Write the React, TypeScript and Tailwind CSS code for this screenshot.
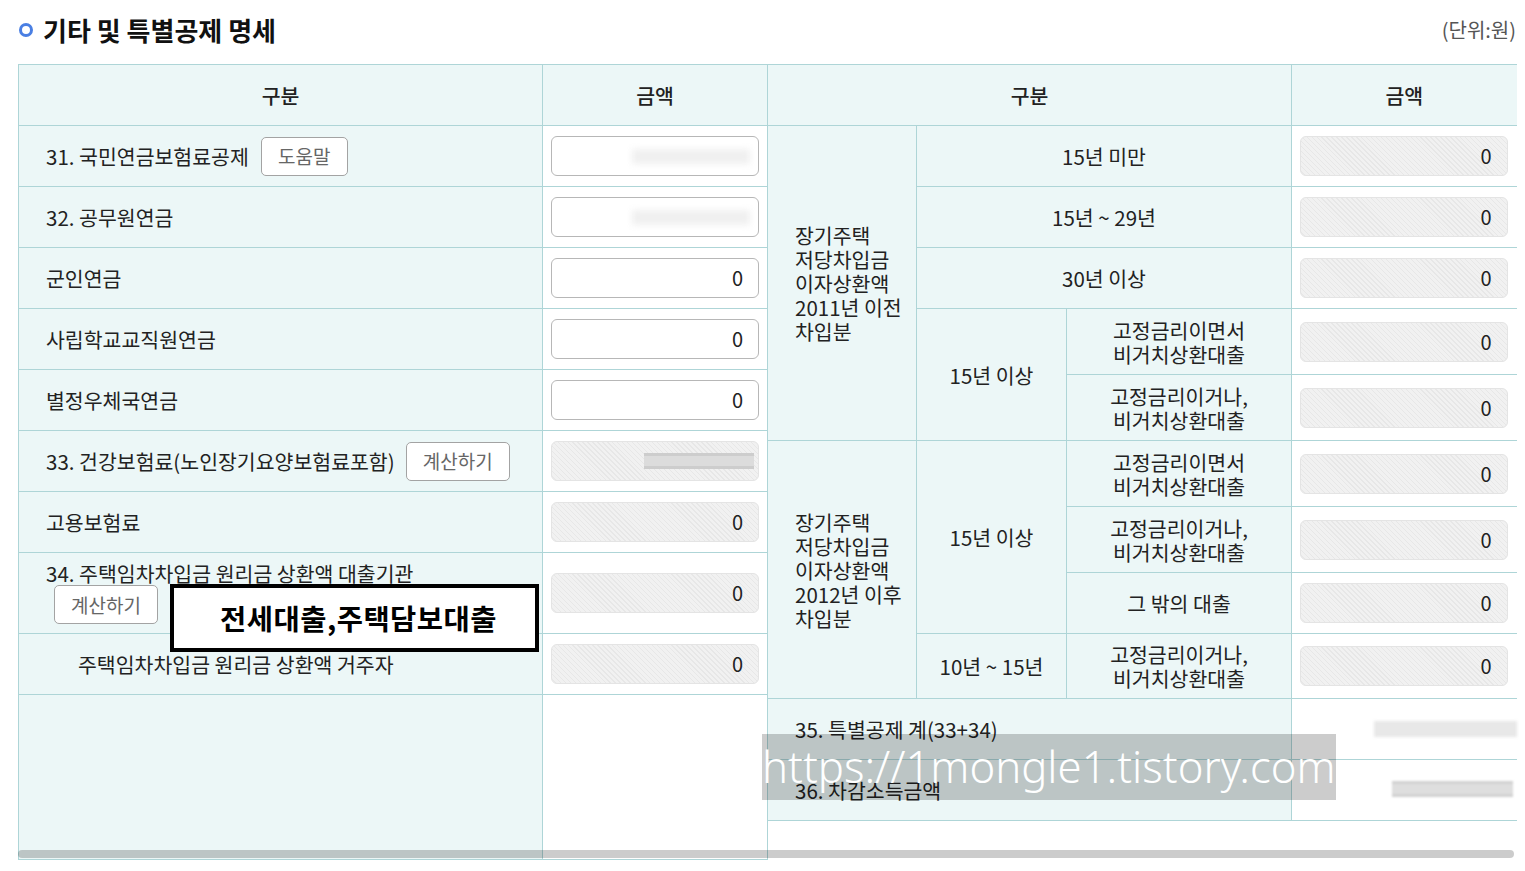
import React from "react";

const FONT = "font-['Noto_Sans_CJK_KR','Noto_Sans',sans-serif]";
const BD = "border border-[#aed5d7]";
const TEAL = "bg-[#ecf7f7]";
const HATCH =
  "bg-[#efefef] bg-[image:repeating-linear-gradient(45deg,#f1f1f1_0px,#f1f1f1_2.5px,#e7e7e7_2.5px,#e7e7e7_3.5px)]";

function Edit({ value, redact }: { value?: string; redact?: boolean }) {
  return (
    <div className="relative h-10 rounded-[6px] border border-[#b7b7b7] bg-white flex items-center justify-end pr-[15px] text-[20px] text-[#222] overflow-hidden">
      {redact && (
        <div className="absolute right-[8px] top-[12px] h-[15px] w-[118px] bg-[#f0f0f0] blur-[3px]" />
      )}
      {value}
    </div>
  );
}

function RO({ value, bar }: { value?: string; bar?: boolean }) {
  return (
    <div
      className={`relative h-10 rounded-[6px] border border-[#e4e4e4] ${HATCH} flex items-center justify-end pr-[15px] text-[20px] text-[#222] overflow-hidden`}
    >
      {bar && (
        <div className="absolute right-[4px] top-[11px] h-[16px] w-[110px] bg-[#dcdcdc] border-y-[3px] border-[#cdcdcd]" />
      )}
      {value}
    </div>
  );
}

function Btn({ children, className = "" }: { children: React.ReactNode; className?: string }) {
  return (
    <span
      className={`inline-flex items-center justify-center h-[39px] rounded-[5px] border border-[#a3a3a3] bg-white text-[19px] text-[#666] ${className}`}
    >
      {children}
    </span>
  );
}

function LCell({ children, h = "h-[61px]", className = "" }: { children: React.ReactNode; h?: string; className?: string }) {
  return <td className={`${BD} ${TEAL} ${h} pl-[27px] text-left align-middle ${className}`}>{children}</td>;
}

function VCell({ children }: { children: React.ReactNode }) {
  return <td className={`${BD} bg-white px-[8px] align-middle`}>{children}</td>;
}

function RVCell({ children }: { children: React.ReactNode }) {
  return <td className={`${BD} border-r-0 bg-white pl-[8px] pr-[9px] align-middle`}>{children}</td>;
}

export default function App() {
  return (
    <div className={`relative w-[1525px] h-[871px] bg-white overflow-hidden ${FONT} text-[#222]`}>
      {/* title */}
      <div className="flex items-center justify-between h-[60px] pl-[19px] pr-[9px]">
        <div className="flex items-center gap-[10px]">
          <span className="block w-[14px] h-[14px] rounded-full border-[3px] border-[#4a7fe3]" />
          <span className="text-[26px] font-semibold text-[#111] leading-none">기타 및 특별공제 명세</span>
        </div>
        <span className="text-[20px] text-[#555]">(단위:원)</span>
      </div>

      {/* tables */}
      <div className="mt-[4px] ml-[18px] w-[1498px] flex items-start text-[20.5px] leading-6">
        {/* left table */}
        <table className="w-[749px] table-fixed border-collapse">
          <colgroup>
            <col className="w-[524px]" />
            <col className="w-[225px]" />
          </colgroup>
          <thead>
            <tr>
              <th className={`${BD} ${TEAL} h-[61px] font-medium`}>구분</th>
              <th className={`${BD} ${TEAL} h-[61px] font-medium`}>금액</th>
            </tr>
          </thead>
          <tbody>
            <tr>
              <LCell>
                <span className="inline-flex items-center">
                  31. 국민연금보험료공제
                  <Btn className="ml-[12px] w-[87px]">도움말</Btn>
                </span>
              </LCell>
              <VCell>
                <Edit redact />
              </VCell>
            </tr>
            <tr>
              <LCell>32. 공무원연금</LCell>
              <VCell>
                <Edit redact />
              </VCell>
            </tr>
            <tr>
              <LCell>군인연금</LCell>
              <VCell>
                <Edit value="0" />
              </VCell>
            </tr>
            <tr>
              <LCell>사립학교교직원연금</LCell>
              <VCell>
                <Edit value="0" />
              </VCell>
            </tr>
            <tr>
              <LCell>별정우체국연금</LCell>
              <VCell>
                <Edit value="0" />
              </VCell>
            </tr>
            <tr>
              <LCell>
                <span className="inline-flex items-center">
                  33. 건강보험료(노인장기요양보험료포함)
                  <Btn className="ml-[11px] w-[104px]">계산하기</Btn>
                </span>
              </LCell>
              <VCell>
                <RO bar />
              </VCell>
            </tr>
            <tr>
              <LCell>고용보험료</LCell>
              <VCell>
                <RO value="0" />
              </VCell>
            </tr>
            <tr>
              <td className={`${BD} ${TEAL} h-[81px] pl-[27px] pt-[8px] text-left align-top`}>
                <div>34. 주택임차차입금 원리금 상환액 대출기관</div>
                <Btn className="ml-[8px] w-[104px]">계산하기</Btn>
              </td>
              <VCell>
                <RO value="0" />
              </VCell>
            </tr>
            <tr>
              <LCell className="pl-[59px]">주택임차차입금 원리금 상환액 거주자</LCell>
              <VCell>
                <RO value="0" />
              </VCell>
            </tr>
            <tr>
              <td className={`${BD} ${TEAL} h-[165px]`} />
              <td className={`${BD} bg-white h-[165px]`} />
            </tr>
          </tbody>
        </table>

        {/* right table */}
        <table className="w-[749px] -ml-px table-fixed border-collapse">
          <colgroup>
            <col className="w-[149px]" />
            <col className="w-[150px]" />
            <col className="w-[225px]" />
            <col className="w-[225px]" />
          </colgroup>
          <thead>
            <tr>
              <th colSpan={3} className={`${BD} ${TEAL} h-[61px] font-medium`}>
                구분
              </th>
              <th className={`${BD} border-r-0 ${TEAL} h-[61px] font-medium`}>금액</th>
            </tr>
          </thead>
          <tbody className="text-center">
            <tr>
              <td rowSpan={5} className={`${BD} ${TEAL} pl-[27px] text-left align-middle`}>
                장기주택
                <br />
                저당차입금
                <br />
                이자상환액
                <br />
                2011년 이전
                <br />
                차입분
              </td>
              <td colSpan={2} className={`${BD} ${TEAL} h-[61px]`}>
                15년 미만
              </td>
              <RVCell>
                <RO value="0" />
              </RVCell>
            </tr>
            <tr>
              <td colSpan={2} className={`${BD} ${TEAL} h-[61px]`}>
                15년 ~ 29년
              </td>
              <RVCell>
                <RO value="0" />
              </RVCell>
            </tr>
            <tr>
              <td colSpan={2} className={`${BD} ${TEAL} h-[61px]`}>
                30년 이상
              </td>
              <RVCell>
                <RO value="0" />
              </RVCell>
            </tr>
            <tr>
              <td rowSpan={2} className={`${BD} ${TEAL}`}>
                15년 이상
              </td>
              <td className={`${BD} ${TEAL} h-[66px]`}>
                고정금리이면서
                <br />
                비거치상환대출
              </td>
              <RVCell>
                <RO value="0" />
              </RVCell>
            </tr>
            <tr>
              <td className={`${BD} ${TEAL} h-[66px]`}>
                고정금리이거나,
                <br />
                비거치상환대출
              </td>
              <RVCell>
                <RO value="0" />
              </RVCell>
            </tr>
            <tr>
              <td rowSpan={4} className={`${BD} ${TEAL} pl-[27px] text-left align-middle`}>
                장기주택
                <br />
                저당차입금
                <br />
                이자상환액
                <br />
                2012년 이후
                <br />
                차입분
              </td>
              <td rowSpan={3} className={`${BD} ${TEAL}`}>
                15년 이상
              </td>
              <td className={`${BD} ${TEAL} h-[66px]`}>
                고정금리이면서
                <br />
                비거치상환대출
              </td>
              <RVCell>
                <RO value="0" />
              </RVCell>
            </tr>
            <tr>
              <td className={`${BD} ${TEAL} h-[66px]`}>
                고정금리이거나,
                <br />
                비거치상환대출
              </td>
              <RVCell>
                <RO value="0" />
              </RVCell>
            </tr>
            <tr>
              <td className={`${BD} ${TEAL} h-[61px]`}>그 밖의 대출</td>
              <RVCell>
                <RO value="0" />
              </RVCell>
            </tr>
            <tr>
              <td className={`${BD} ${TEAL}`}>10년 ~ 15년</td>
              <td className={`${BD} ${TEAL} h-[65px]`}>
                고정금리이거나,
                <br />
                비거치상환대출
              </td>
              <RVCell>
                <RO value="0" />
              </RVCell>
            </tr>
            <tr>
              <td colSpan={3} className={`${BD} ${TEAL} h-[61px] pl-[27px] text-left`}>
                35. 특별공제 계(33+34)
              </td>
              <td className={`${BD} border-r-0 bg-white relative`}>
                <div className="absolute right-0 top-[22px] h-[16px] w-[143px] bg-[#e8e8e8] blur-[1.5px]" />
              </td>
            </tr>
            <tr>
              <td colSpan={3} className={`${BD} ${TEAL} h-[61px] pl-[27px] text-left`}>
                36. 차감소득금액
              </td>
              <td className={`${BD} border-r-0 bg-white relative`}>
                <div className="absolute right-[4px] top-[21px] h-[16px] w-[121px] bg-[#dedede] border-y-[3px] border-[#d2d2d2] blur-[1px]" />
              </td>
            </tr>
          </tbody>
        </table>
      </div>

      {/* overlay scrollbar */}
      <div className="absolute left-[18px] top-[850px] w-[1496px] h-[8px] rounded-full bg-black/20" />

      {/* annotation box */}
      <div className="absolute left-[170px] top-[584px] w-[369px] h-[68px] border-[4px] border-black bg-white flex items-center justify-center pl-[8px]">
        <span className="text-[28.5px] font-bold text-black tracking-[0.5px]">전세대출,주택담보대출</span>
      </div>

      {/* watermark */}
      <div className="absolute left-[762px] top-[734px] w-[574px] h-[66px] bg-black/[0.2] flex items-center overflow-hidden">
        <span className="font-['Noto_Sans','Open_Sans',sans-serif] font-light text-white text-[43.7px] leading-none whitespace-nowrap">
          https://1mongle1.tistory.com
        </span>
      </div>
    </div>
  );
}
